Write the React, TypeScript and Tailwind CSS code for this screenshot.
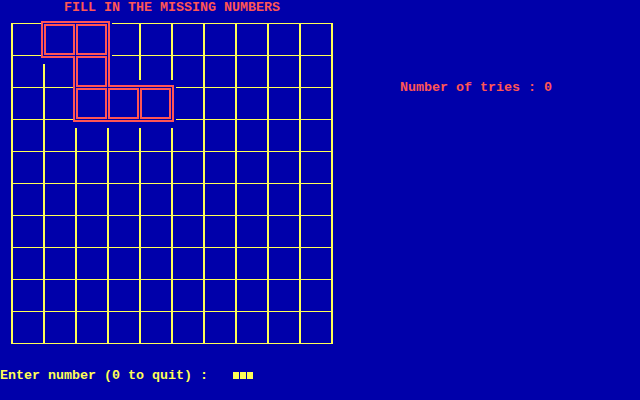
import React from "react";

const YELLOW = "#FFFF55";
const RED = "#FF5555";

// grid lines sit every 32px, verticals 2px wide, horizontals 1px
const colX = (c: number) => 11 + 32 * c;
const rowY = (r: number) => 23 + 32 * r;

// [x, from, to] in page pixels, inclusive
const verticals: [number, number, number][] = [
  [colX(0), 23, 343],
  [colX(1), 64, 343],
  [colX(2), 128, 343],
  [colX(3), 128, 343],
  [colX(4), 23, 79],
  [colX(4), 128, 343],
  [colX(5), 23, 79],
  [colX(5), 128, 343],
  [colX(6), 23, 343],
  [colX(7), 23, 343],
  [colX(8), 23, 343],
  [colX(9), 23, 343],
  [colX(10), 23, 343],
];

// [y, from, to]
const horizontals: [number, number, number][] = [
  [rowY(0), 11, 40],
  [rowY(0), 112, 332],
  [rowY(1), 11, 40],
  [rowY(1), 112, 332],
  [rowY(2), 11, 72],
  [rowY(2), 176, 332],
  [rowY(3), 11, 72],
  [rowY(3), 176, 332],
  ...[4, 5, 6, 7, 8, 9, 10].map((r) => [rowY(r), 11, 332] as [number, number, number]),
];

// the missing cells: [col, row]
const blanks: [number, number][] = [
  [1, 0],
  [2, 0],
  [2, 1],
  [2, 2],
  [3, 2],
  [4, 2],
];

function Board() {
  return (
    <svg
      width={340}
      height={352}
      viewBox="0 16 340 352"
      shapeRendering="crispEdges"
      className="block shrink-0"
    >
      {verticals.map(([x, a, b], i) => (
        <rect key={`v${i}`} x={x} y={a} width={2} height={b - a + 1} fill={YELLOW} />
      ))}
      {horizontals.map(([y, a, b], i) => (
        <rect key={`h${i}`} x={a} y={y} width={b - a + 1} height={1} fill={YELLOW} />
      ))}
      {blanks.map(([c, r]) => (
        <rect
          key={`b${c}-${r}`}
          x={colX(c) + 2}
          y={rowY(r) + 2}
          width={29}
          height={29}
          fill="none"
          stroke={RED}
          strokeWidth={2}
        />
      ))}
      {/* outline round the whole shape */}
      <polygon
        points="42,22 109,22 109,86 173,86 173,121 74,121 74,57 42,57"
        fill="none"
        stroke={RED}
        strokeWidth={2}
      />
    </svg>
  );
}

export default function App() {
  return (
    <div
      className="flex h-[400px] w-[640px] flex-col overflow-hidden bg-[#0000AA] text-[13.34px] font-bold leading-4 whitespace-pre"
      style={{ fontFamily: '"Liberation Mono", "DejaVu Sans Mono", monospace' }}
    >
      <div className="h-4 pl-[64px] text-[#FF5555]">FILL IN THE MISSING NUMBERS</div>

      <div className="flex h-[352px]">
        <Board />
        <div className="ml-[60px] mt-[64px] h-4 text-[#FF5555]">Number of tries : 0</div>
      </div>

      <div className="flex h-4 items-start text-[#FFFF55]">
        <span>Enter number (0 to quit) :</span>
        <div className="ml-[25px] mt-[4px] flex gap-px">
          <span className="h-[7px] w-[6px] bg-[#FFFF55]" />
          <span className="h-[7px] w-[6px] bg-[#FFFF55]" />
          <span className="h-[7px] w-[6px] bg-[#FFFF55]" />
        </div>
      </div>
    </div>
  );
}
